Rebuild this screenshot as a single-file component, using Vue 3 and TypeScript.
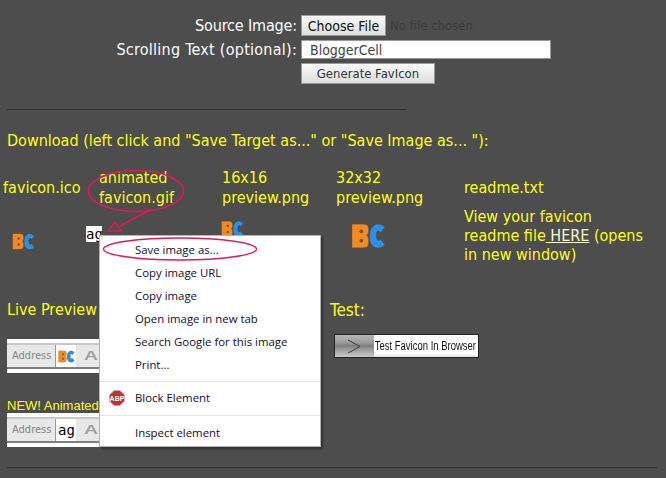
<script setup lang="ts">
const items = ['Save image as...', 'Copy image URL', 'Copy image', 'Open image in new tab', 'Search Google for this image', 'Print...']
</script>

<template>
  <div class="page">
    <svg width="0" height="0" class="defs">
      <symbol id="bc" viewBox="0 0 34 25">
        <path d="M1 1h11q5 0 5 4.500v3q0 2.500-2 3.500q2 1 2 3.500v4q0 4.500-5 4.500H1z" fill="#f58a1f" stroke="#5b5148" stroke-opacity=".5" stroke-width=".6" />
        <circle cx="10" cy="8" r="1.800" fill="#6b5238" />
        <circle cx="10" cy="17" r="1.800" fill="#6b5238" />
        <path d="M33 4Q29 .5 25 1Q18 3 18 13Q18 23 25 24Q29 25 33 21L29 16Q26 18 25 15Q24 12 25 9Q26 6 29 9Z" fill="#2f8fe6" stroke="#3c4c5a" stroke-opacity=".5" stroke-width=".6" />
      </symbol>
    </svg>

    <form class="form" @submit.prevent>
      <label class="lab src">Source Image:</label>
      <div class="file-row"><button class="choose" type="button">Choose File</button><span class="nofile">No file chosen</span></div>
      <label class="lab scr">Scrolling Text (optional):</label>
      <input class="txt" value="BloggerCell" />
      <span></span>
      <button class="gen" type="button">Generate FavIcon</button>
    </form>

    <hr class="rule short" />

    <h2 class="heading">Download (left click and "Save Target as..." or "Save Image as... "):</h2>

    <div class="downloads">
      <div class="dl"><div class="name mid">favicon.ico</div><svg class="ic ic1"><use href="#bc" /></svg></div>
      <div class="dl"><div class="name">animated<br />favicon.gif</div><div class="ag">ag</div></div>
      <div class="dl"><div class="name">16x16<br />preview.png</div><svg class="ic ic3"><use href="#bc" /></svg></div>
      <div class="dl"><div class="name">32x32<br />preview.png</div><svg class="ic ic4"><use href="#bc" /></svg></div>
      <div class="dl">
        <div class="name mid">readme.txt</div>
        <p class="view">View your favicon<br />readme file<a class="here"> HERE</a> (opens<br />in new window)</p>
      </div>
    </div>

    <div class="lower">
      <div class="live">
        <div class="label first">Live Preview</div>
        <div class="bar">
          <span class="addr">Address</span>
          <span class="field"><svg class="ic barico"><use href="#bc" /></svg></span>
          <span class="aicon"><span class="aglyph">A</span></span>
        </div>
        <div class="newl">NEW! Animated</div>
        <div class="bar">
          <span class="addr">Address</span>
          <span class="field"><span class="agsmall">ag</span></span>
          <span class="aicon"><span class="aglyph">A</span></span>
        </div>
      </div>
      <div class="test">
        <div class="label testl">Test:</div>
        <div class="testbtn">
          <span class="arrowbox"><svg width="38" height="22" viewBox="0 0 38 22"><path d="M13 5l12 6.500-12 6.500" fill="none" stroke="#3c3c3c" stroke-width="1" /></svg></span>
          <span class="testtxt">Test Favicon In Browser</span>
        </div>
      </div>
    </div>

    <hr class="rule long" />

    <ul class="menu">
      <li v-for="it in items" :key="it" class="item">{{ it }}</li>
      <li class="sep"></li>
      <li class="item abp">
        <svg class="abpicon" width="16" height="16" viewBox="0 0 16 16">
          <path d="M5 .5h6L15.500 5v6L11 15.500H5L.5 11V5z" fill="#c5302a" stroke="#b0b0b0" stroke-width="1" />
          <text x="8" y="10.800" text-anchor="middle" class="abptext">ABP</text>
        </svg>
        Block Element
      </li>
      <li class="sep"></li>
      <li class="item inspect">Inspect element</li>
    </ul>

    <svg class="annot" width="666" height="478" viewBox="0 0 666 478">
      <g fill="none" stroke="#e0185f" stroke-width="1.500">
        <ellipse cx="136" cy="191" rx="47.500" ry="20.500" />
        <ellipse cx="180" cy="249" rx="76.500" ry="11" />
        <path d="M150 210L120 226" />
        <path d="M115 222l-6.500 9h13z" />
      </g>
    </svg>
  </div>
</template>

<style>
html, body { margin: 0; background: #4d4d4d; }
</style>

<style scoped>
.page {
  position: relative;
  width: 666px;
  height: 478px;
  overflow: hidden;
  background: #4d4d4d;
  color: #ffff14;
  font-family: "DejaVu Sans Condensed", "DejaVu Sans", sans-serif;
  font-size: 16px;
}
.defs { position: absolute; }
.form {
  display: grid;
  grid-template-columns: 297px 1fr;
  column-gap: 4px;
  row-gap: 4px;
  padding-top: 15px;
  align-items: center;
}
.lab { text-align: right; color: #fff; font-size: 16px; }
.src { letter-spacing: -.15px; }
.scr { letter-spacing: .25px; }
.file-row { display: flex; align-items: center; gap: 4px; height: 21px; }
.choose {
  width: 85px; height: 21px; padding: 0; box-sizing: border-box;
  border: 1px solid #9a9a9a;
  background: linear-gradient(#fafafa, #dedede);
  color: #111;
  font: 14px "DejaVu Sans Condensed", sans-serif;
  white-space: nowrap;
}
.nofile { color: #3c3c3c; font-size: 13px; }
.txt {
  width: 250px; height: 19px; box-sizing: border-box;
  border: 1px solid #9a9a9a; padding: 0 8px; margin: 0;
  background: #fff; color: #444;
  font: 14px "DejaVu Sans Condensed", sans-serif;
}
.gen {
  width: 134px; height: 21px; padding: 0; box-sizing: border-box;
  border: 1px solid #9a9a9a;
  background: linear-gradient(#fafafa, #dedede);
  color: #333;
  font: 13px "DejaVu Sans Condensed", sans-serif;
}
.rule { border: 0; height: 1px; background: #333; margin: 0 0 0 7px; }
.short { width: 400px; margin-top: 25px; }
.long { width: 650px; margin-top: 20px; }
.heading { margin: 21px 0 0 7px; font: 16px/20px "DejaVu Sans Condensed", sans-serif; }
.downloads {
  display: grid;
  grid-template-columns: 96px 123px 114px 128px 1fr;
  padding: 17px 0 0 3px;
  line-height: 20px;
}
.name { height: 40px; white-space: nowrap; }
.mid { display: flex; align-items: center; }
.ic { display: block; filter: blur(.3px); }
.ic1 { width: 23px; height: 17px; margin: 25px 0 0 9px; }
.ic3 { width: 23px; height: 18px; margin: 12px 0 0 -1px; }
.ic4 { width: 35px; height: 26px; margin: 15px 0 0 15px; }
.ag { width: 16px; height: 16px; margin: 18px 0 0 -13px; background: #fff; color: #000; font: 14px/16px "DejaVu Sans Mono", monospace; }
.view { margin: -1px 0 0; line-height: 19px; white-space: nowrap; }
.here { color: #ffffc8; text-decoration: underline; }
.lower { display: flex; padding-top: 36px; }
.live { width: 323px; padding-left: 7px; box-sizing: border-box; flex: none; }
.label { height: 20px; line-height: 20px; font-size: 16px; }
.testl { font-size: 17px; }
.first { margin-bottom: 19px; }
.newl { font: 13px/16px "Liberation Sans", sans-serif; margin-top: 25px; height: 15px; white-space: nowrap; }
.bar {
  width: 174px; height: 34px; box-sizing: border-box;
  background: #fff;
  padding: 6px 0 6px;
  display: flex; align-items: stretch;
  position: relative;
}
.bar::before { content: ""; position: absolute; left: 0; right: 0; top: 4px; height: 2px; background: #c8c8c8; }
.bar::after { content: ""; position: absolute; left: 0; right: 0; bottom: 4px; height: 2px; background: #7f7f7f; }
.addr { width: 49px; box-sizing: border-box; background: #e8e8e8; color: #858585; font: 11px/22px "DejaVu Sans Condensed", sans-serif; padding-left: 5px; border-right: 1px solid #999; }
.field { width: 20px; padding-left: 2px; box-sizing: border-box; display: flex; align-items: center; background: #fff; position: relative; z-index: 1; }
.barico { width: 17px; height: 13px; }
.agsmall { color: #000; font: 14px "DejaVu Sans Mono", monospace; }
.aicon { flex: 1; background: #e8e8e8; padding-left: 8px; }
.aglyph { display: inline-block; color: #a0a0a0; font: bold 13px/22px "Liberation Sans", sans-serif; transform: scaleX(1.5); transform-origin: left center; }
.test { padding: 0 0 0 7px; }
.testbtn {
  margin: 14px 0 0 4px;
  width: 145px; height: 24px; box-sizing: border-box;
  border: 1px solid #222;
  background: linear-gradient(#fff 85%, #dcdcdc);
  display: flex;
}
.arrowbox { width: 39px; flex: none; background: linear-gradient(#b8b8b8, #9a9a9a 35%, #7e7e7e 50%, #9a9a9a 65%, #cacaca); display: flex; }
.testtxt { color: #111; font: 12px/22px "Liberation Sans", sans-serif; white-space: nowrap; display: inline-block; transform: scaleX(.79); transform-origin: left center; padding-left: 1px; }
.menu {
  position: absolute; left: 99px; top: 235px;
  width: 222px; height: 212px; box-sizing: border-box;
  margin: 0; padding: 2px 0 0; list-style: none;
  background: #fff;
  border: 1px solid #b4b4b4;
  box-shadow: 2px 2px 2px rgba(0,0,0,.35);
  color: #140c30;
  font: 11.400px/23px "Open Sans", sans-serif;
}
.item { height: 23px; padding-left: 35px; position: relative; }
.sep { height: 1px; background: #e4e4e4; margin: 5px 0 4px; }
.abp { height: 24px; }
.inspect { margin-top: 5px; }
.abpicon { position: absolute; left: 9px; top: 4px; }
.abptext { font: bold 7px "Liberation Sans", sans-serif; fill: #fff; }
.annot { position: absolute; left: 0; top: 0; pointer-events: none; }
</style>
